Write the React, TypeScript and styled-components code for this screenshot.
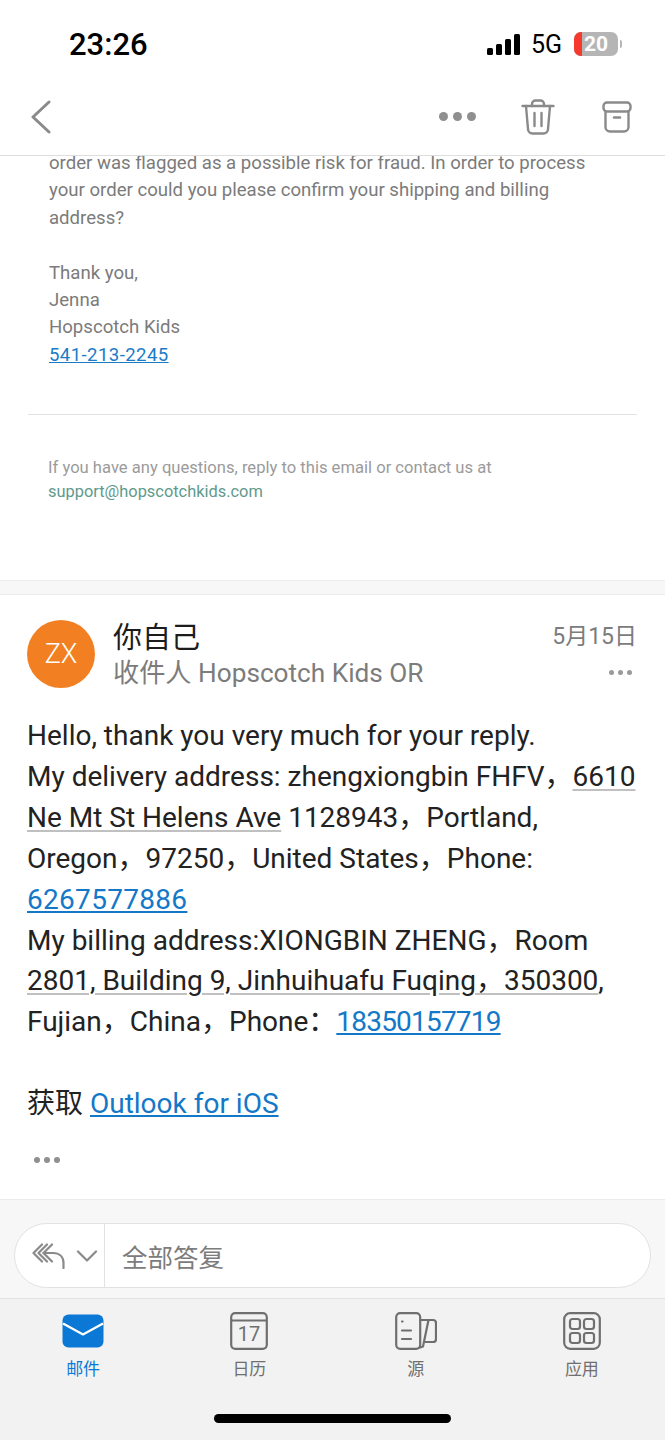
import React from 'react';
import styled, { createGlobalStyle } from 'styled-components';

const FONT = `Roboto, "Noto Sans CJK SC", sans-serif`;

const GlobalStyle = createGlobalStyle`
  html, body {
    margin: 0;
    padding: 0;
    background: #fff;
  }
  * {
    box-sizing: border-box;
  }
`;

const quotedLines = [
  'order was flagged as a possible risk for fraud. In order to process',
  'your order could you please confirm your shipping and billing',
  'address?',
];

const signoffLines = ['Thank you,', 'Jenna', 'Hopscotch Kids'];

const tabs = [
  { label: '邮件', active: true, icon: <MailIcon /> },
  { label: '日历', active: false, icon: <CalendarIcon /> },
  { label: '源', active: false, icon: <FeedIcon /> },
  { label: '应用', active: false, icon: <AppsIcon /> },
];

function MailIcon() {
  return (
    <svg width="42" height="34" viewBox="0 0 42 34">
      <rect x="0.5" y="0.5" width="41" height="33" rx="6" fill="#0a78d4" />
      <path d="M1 9.5 L21 20.5 L41 9.5" fill="none" stroke="#fff" strokeWidth="2.4" />
    </svg>
  );
}

function CalendarIcon() {
  return (
    <svg width="38" height="38" viewBox="0 0 38 38" fill="none" stroke="#6f6f6f" strokeWidth="2.2">
      <rect x="1.2" y="1.2" width="35.6" height="35.6" rx="4" />
      <path d="M1.2 8.5 H36.8" />
      <text x="19" y="29" textAnchor="middle" fontFamily="Roboto, sans-serif" fontSize="20" fill="#6f6f6f" stroke="none">17</text>
    </svg>
  );
}

function FeedIcon() {
  return (
    <svg width="42" height="38" viewBox="0 0 42 38" fill="none" stroke="#6f6f6f" strokeWidth="2.2" strokeLinecap="round" strokeLinejoin="round">
      <rect x="1.2" y="1.2" width="24" height="35.6" rx="4" />
      <path d="M25.2 8 H38 Q41 8 41 11 V27 Q41 30 38 30 H29.5" />
      <path d="M33.5 8 L28 34.5 L25.2 35.5" />
      <path d="M7 9.5 H7.6 M7 18.5 H16 M7 27 H16" />
    </svg>
  );
}

function AppsIcon() {
  return (
    <svg width="38" height="38" viewBox="0 0 38 38" fill="none" stroke="#6f6f6f" strokeWidth="2.2">
      <rect x="1.2" y="1.2" width="35.6" height="35.6" rx="6" />
      <rect x="7" y="7" width="10" height="10" rx="2.5" />
      <rect x="21" y="7" width="10" height="10" rx="2.5" />
      <rect x="7" y="21" width="10" height="10" rx="2.5" />
      <rect x="21" y="21" width="10" height="10" rx="2.5" />
    </svg>
  );
}

const App: React.FC = () => {
  return (
    <Page>
      <GlobalStyle />
      <StatusBar>
        <Clock>23:26</Clock>
        <StatusRight>
          <svg width="34" height="21" viewBox="0 0 34 21" fill="#000">
            <rect x="0" y="14" width="6" height="7" rx="1.5" />
            <rect x="9" y="10" width="6" height="11" rx="1.5" />
            <rect x="18" y="5" width="6" height="16" rx="1.5" />
            <rect x="27" y="0" width="6" height="21" rx="1.5" />
          </svg>
          <Network>5G</Network>
          <Battery>
            <BatteryFill />
            <BatteryLevel>20</BatteryLevel>
            <BatteryCap />
          </Battery>
        </StatusRight>
      </StatusBar>

      <Toolbar>
        <svg width="20" height="34" viewBox="0 0 20 34" fill="none" stroke="#8a8a8a" strokeWidth="3" strokeLinecap="round" strokeLinejoin="round">
          <path d="M18 2 L2 17 L18 32" />
        </svg>
        <ToolbarActions>
          <ToolbarMore>
            <Dot $size={9} $color="#8f8f8f" />
            <Dot $size={9} $color="#8f8f8f" />
            <Dot $size={9} $color="#8f8f8f" />
          </ToolbarMore>
          <svg width="34" height="36" viewBox="0 0 34 36" fill="none" stroke="#8a8a8a" strokeWidth="2.4" strokeLinecap="round" strokeLinejoin="round">
            <path d="M1.5 7 H32.5" />
            <path d="M11 7 V5 A3.5 3.5 0 0 1 14.5 1.5 H19.5 A3.5 3.5 0 0 1 23 5 V7" />
            <path d="M5 7 L7 30 A4.5 4.5 0 0 0 11.5 34.5 H22.5 A4.5 4.5 0 0 0 27 30 L29 7" />
            <path d="M13.5 14 V27 M20.5 14 V27" />
          </svg>
          <svg width="30" height="32" viewBox="0 0 30 32" fill="none" stroke="#8a8a8a" strokeWidth="2.4" strokeLinecap="round" strokeLinejoin="round">
            <rect x="1.5" y="1.5" width="27" height="9" rx="3.5" />
            <path d="M3.5 10.5 V26 A4.5 4.5 0 0 0 8 30.5 H22 A4.5 4.5 0 0 0 26.5 26 V10.5" />
            <path d="M12 16.5 H18" />
          </svg>
        </ToolbarActions>
      </Toolbar>

      <Content>
        <QuotedMessage>
          <QuotedBlock>
            {quotedLines.map((line) => (
              <QuotedLine key={line}>{line}</QuotedLine>
            ))}
          </QuotedBlock>
          <QuotedBlock>
            {signoffLines.map((line) => (
              <QuotedLine key={line}>{line}</QuotedLine>
            ))}
            <QuotedLine>
              <PhoneLink>541-213-2245</PhoneLink>
            </QuotedLine>
          </QuotedBlock>
          <QuotedRule />
          <QuotedFooter>
            <div>If you have any questions, reply to this email or contact us at</div>
            <SupportLink>support@hopscotchkids.com</SupportLink>
          </QuotedFooter>
        </QuotedMessage>

        <MessageGap />

        <Message>
          <MessageHeader>
            <Avatar>ZX</Avatar>
            <Sender>
              <SenderName>你自己</SenderName>
              <Recipient>收件人 Hopscotch Kids OR</Recipient>
            </Sender>
            <MessageMeta>
              <MessageDate>5月15日</MessageDate>
              <MessageMore>
                <Dot $size={5} $color="#9a9a9a" />
                <Dot $size={5} $color="#9a9a9a" />
                <Dot $size={5} $color="#9a9a9a" />
              </MessageMore>
            </MessageMeta>
          </MessageHeader>

          <MessageBody>
            <BodyLine>Hello, thank you very much for your reply.</BodyLine>
            <BodyLine>
              My delivery address: zhengxiongbin FHFV，<Detected>6610</Detected>
            </BodyLine>
            <BodyLine>
              <Detected>Ne Mt St Helens Ave</Detected> 1128943，Portland,
            </BodyLine>
            <BodyLine>Oregon，97250，United States，Phone:</BodyLine>
            <BodyLine>
              <BodyLink $tracking={0.3}>6267577886</BodyLink>
            </BodyLine>
            <BodyLine>My billing address:XIONGBIN ZHENG，Room</BodyLine>
            <BodyLine>
              <Detected>2801, Building 9, Jinhuihuafu Fuqing，350300</Detected>,
            </BodyLine>
            <BodyLine>
              Fujian，China，Phone：<BodyLink $tracking={-0.8}>18350157719</BodyLink>
            </BodyLine>
            <BodyLine>&nbsp;</BodyLine>
            <BodyLine>
              获取 <BodyLink>Outlook for iOS</BodyLink>
            </BodyLine>
          </MessageBody>

          <TrimmedContent>
            <Dot $size={6} $color="#8f8f8f" />
            <Dot $size={6} $color="#8f8f8f" />
            <Dot $size={6} $color="#8f8f8f" />
          </TrimmedContent>
        </Message>
      </Content>

      <ReplyArea>
        <ReplyPill>
          <ReplyActions>
            <svg width="34" height="26" viewBox="0 0 34 26" fill="none" stroke="#8a8a8a" strokeWidth="2.2" strokeLinecap="round" strokeLinejoin="round">
              <path d="M10 1.5 L1.5 10 L10 18.5" />
              <path d="M15 1.5 L6.5 10 L15 18.5" />
              <path d="M20 1.5 L11.5 10 L20 18.5" />
              <path d="M11.5 10 H21 C27.5 10 31.5 14 31.5 20 V25" />
            </svg>
            <svg width="22" height="12" viewBox="0 0 22 12" fill="none" stroke="#8a8a8a" strokeWidth="2.2" strokeLinecap="round" strokeLinejoin="round">
              <path d="M2 1.5 L11 10.5 L20 1.5" />
            </svg>
          </ReplyActions>
          <ReplyLabel>全部答复</ReplyLabel>
        </ReplyPill>
      </ReplyArea>

      <TabBar>
        <Tabs>
          {tabs.map((tab) => (
            <Tab key={tab.label}>
              <TabIcon>{tab.icon}</TabIcon>
              <TabLabel $active={tab.active}>{tab.label}</TabLabel>
            </Tab>
          ))}
        </Tabs>
        <HomeIndicator />
      </TabBar>
    </Page>
  );
};

const Page = styled.div`
  width: 665px;
  height: 1440px;
  display: flex;
  flex-direction: column;
  overflow: hidden;
  background: #fff;
  font-family: ${FONT};
`;

const StatusBar = styled.div`
  height: 88px;
  flex-shrink: 0;
  display: flex;
  align-items: center;
  justify-content: space-between;
  padding: 0 47px 0 69px;
`;

const Clock = styled.div`
  font-size: 31px;
  font-weight: 500;
  color: #000;
`;

const StatusRight = styled.div`
  display: flex;
  align-items: center;
  gap: 10px;
`;

const Network = styled.div`
  font-size: 25px;
  color: #000;
`;

const Battery = styled.div`
  position: relative;
  width: 44px;
  height: 24px;
  margin-left: 2px;
  border-radius: 7px;
  background: #b5b5b5;
  display: flex;
  align-items: center;
  justify-content: center;
`;

const BatteryFill = styled.div`
  position: absolute;
  left: 0;
  top: 0;
  width: 8px;
  height: 100%;
  background: #f5392d;
  border-radius: 7px 0 0 7px;
`;

const BatteryLevel = styled.span`
  position: relative;
  font-size: 21px;
  font-weight: 700;
  color: #fff;
`;

const BatteryCap = styled.div`
  position: absolute;
  right: -4px;
  top: 8px;
  width: 2px;
  height: 8px;
  border-radius: 0 2px 2px 0;
  background: #b5b5b5;
`;

const Toolbar = styled.div`
  height: 68px;
  flex-shrink: 0;
  display: flex;
  align-items: center;
  justify-content: space-between;
  padding: 0 33px 10px 31px;
  border-bottom: 1px solid #dedede;
`;

const ToolbarActions = styled.div`
  display: flex;
  align-items: center;
  gap: 47px;
`;

const ToolbarMore = styled.div`
  display: flex;
  gap: 5px;
  margin-right: -2px;
`;

const Dot = styled.span<{ $size: number; $color: string }>`
  display: block;
  width: ${({ $size }) => $size}px;
  height: ${({ $size }) => $size}px;
  border-radius: 50%;
  background: ${({ $color }) => $color};
`;

const Content = styled.div`
  flex: 1;
  min-height: 0;
  overflow: hidden;
`;

const QuotedMessage = styled.div`
  height: 430px;
  margin-top: -6px;
  padding: 0 28px;
`;

const QuotedBlock = styled.div`
  padding-left: 21px;
  margin-bottom: 28px;
  font-size: 18.6px;
  line-height: 27.3px;
  color: #7b7b7b;
`;

const QuotedLine = styled.div`
  white-space: nowrap;
`;

const PhoneLink = styled.span`
  color: #1a7cc7;
  text-decoration: underline;
  letter-spacing: 0.4px;
`;

const QuotedRule = styled.div`
  height: 1px;
  margin-top: 45px;
  background: #e2e2e2;
`;

const QuotedFooter = styled.div`
  margin-top: 41px;
  padding-left: 20px;
  font-size: 16.6px;
  line-height: 24px;
  color: #9b9b9b;
`;

const SupportLink = styled.div`
  color: #5f9a8c;
  font-size: 16.4px;
`;

const MessageGap = styled.div`
  height: 15px;
  background: #f7f7f7;
  border-top: 1px solid #ededed;
  border-bottom: 1px solid #ededed;
`;

const Message = styled.div`
  padding: 25px 28px 0;
`;

const MessageHeader = styled.div`
  display: flex;
  align-items: flex-start;
`;

const Avatar = styled.div`
  width: 68px;
  height: 68px;
  flex-shrink: 0;
  margin-left: -1px;
  border-radius: 50%;
  background: #f28022;
  color: #fff;
  display: flex;
  align-items: center;
  justify-content: center;
  font-size: 27px;
  font-weight: 300;
`;

const Sender = styled.div`
  flex: 1;
  margin-left: 18px;
`;

const SenderName = styled.div`
  font-size: 29px;
  line-height: 36px;
  color: #1c1c1c;
`;

const Recipient = styled.div`
  margin-top: -1px;
  font-size: 26.2px;
  line-height: 36px;
  color: #7c7c7c;
  white-space: nowrap;
`;

const MessageMeta = styled.div`
  display: flex;
  flex-direction: column;
  align-items: flex-end;
`;

const MessageDate = styled.div`
  font-size: 23px;
  line-height: 34px;
  color: #7c7c7c;
`;

const MessageMore = styled.div`
  display: flex;
  gap: 4px;
  margin-top: 16px;
  padding-right: 5px;
`;

const MessageBody = styled.div`
  margin: 25px 0 0 -1px;
  font-size: 28px;
  line-height: 40.9px;
  color: #222;
`;

const BodyLine = styled.div`
  white-space: nowrap;
`;

const Detected = styled.span`
  text-decoration: underline;
  text-decoration-color: #c0c0c0;
  text-underline-offset: 3px;
`;

const BodyLink = styled.span<{ $tracking?: number }>`
  color: #1478c8;
  text-decoration: underline;
  letter-spacing: ${({ $tracking }) => $tracking ?? 0}px;
`;

const TrimmedContent = styled.div`
  display: flex;
  gap: 4px;
  margin: 32px 0 0 6px;
`;

const ReplyArea = styled.div`
  height: 100px;
  flex-shrink: 0;
  padding: 23px 14px 0;
  background: #f7f7f7;
  border-top: 1px solid #ebebeb;
  border-bottom: 1px solid #e2e2e2;
`;

const ReplyPill = styled.div`
  height: 65px;
  display: flex;
  align-items: center;
  background: #fff;
  border: 1px solid #e2e2e2;
  border-radius: 33px;
`;

const ReplyActions = styled.div`
  width: 90px;
  height: 100%;
  flex-shrink: 0;
  display: flex;
  align-items: center;
  gap: 10px;
  padding-left: 17px;
  border-right: 1px solid #e2e2e2;
`;

const ReplyLabel = styled.div`
  margin-left: 17px;
  font-size: 25.5px;
  color: #7c7c7c;
`;

const TabBar = styled.div`
  height: 141px;
  flex-shrink: 0;
  display: flex;
  flex-direction: column;
  background: #f2f2f2;
`;

const Tabs = styled.div`
  display: grid;
  grid-template-columns: repeat(4, 1fr);
  padding-top: 13px;
`;

const Tab = styled.div`
  display: flex;
  flex-direction: column;
  align-items: center;
`;

const TabIcon = styled.div`
  height: 38px;
  display: flex;
  align-items: center;
`;

const TabLabel = styled.div<{ $active: boolean }>`
  margin-top: 7px;
  font-size: 17px;
  line-height: 24px;
  color: ${({ $active }) => ($active ? '#0a78d4' : '#6f6f6f')};
`;

const HomeIndicator = styled.div`
  width: 237px;
  height: 9px;
  margin: 33px auto 0;
  border-radius: 5px;
  background: #000;
`;

export default App;
